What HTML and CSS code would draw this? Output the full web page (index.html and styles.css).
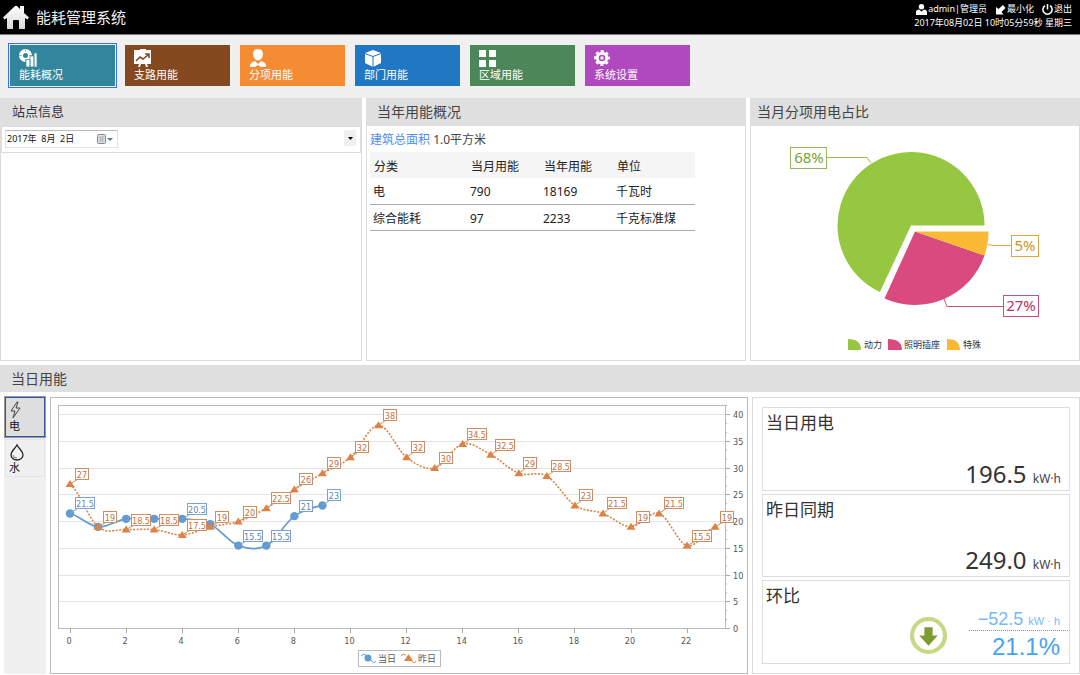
FILE: index.html
```html
<!DOCTYPE html>
<html lang="zh-CN">
<head>
<meta charset="utf-8">
<title>能耗管理系统</title>
<link rel="stylesheet" href="styles.css">
</head>
<body>
<header class="topbar">
  <div class="brand">
    <svg class="brand-icon" viewBox="0 0 26 24" aria-hidden="true">
      <defs><linearGradient id="house" x1="0" y1="0" x2="0" y2="1"><stop offset="0" stop-color="#fff"/><stop offset="1" stop-color="#d8d8d8"/></linearGradient></defs>
      <path fill="url(#house)" d="M11.500 1.500q1.500-1.500 3 0L17 4V1h4v7l5 4.500-1.500 2L22 13v11h-6v-8q0-1-1-1h-4q-1 0-1 1v8H4V13l-2.500 1.500L0 12.500Z"/>
    </svg>
    <h1 class="brand-name">能耗管理系统</h1>
  </div>
  <div class="session">
    <div class="session-links">
      <a class="session-link" href="#user"><svg class="session-icon" viewBox="0 0 11 11" aria-hidden="true"><circle cx="5.500" cy="2.800" r="2.700"/><path d="M0 11V8q0-2 3-2.500L5.500 7.500 8 5.500Q11 6 11 8v3Z"/></svg>admin|管理员</a>
      <a class="session-link" href="#minimize"><svg class="session-icon" viewBox="0 0 11 11" aria-hidden="true"><path d="M1 3v7.500h7.500L6.500 8 10.500 4 8 1 3.500 5Z"/></svg>最小化</a>
      <a class="session-link" href="#exit"><svg class="session-icon" viewBox="0 0 11 11" aria-hidden="true"><path d="M3 1.700a4.600 4.600 0 1 0 5 0M5.500 0v5.500" fill="none" stroke="#fff" stroke-width="1.500"/></svg>退出</a>
    </div>
    <time class="clock" datetime="2017-08-02T10:05:59">2017年08月02日 10时05分59秒 星期三</time>
  </div>
</header>

<nav class="modules">
  <button class="module teal active" type="button">
    <svg class="module-icon" viewBox="0 0 18 18" aria-hidden="true"><circle cx="6.500" cy="6.500" r="4.500" fill="none" stroke="#fff" stroke-width="4"/><path d="M6.500 0v3M6.500 10v3M0 6.500h3M10 6.500h3" stroke="#32869c" stroke-width="0.500"/><path d="M7 10.500h4V18H7ZM11 7h4v11h-4ZM15 4h3v14h-3Z" fill="#fff" stroke="#32869c" stroke-width="0.700"/></svg>
    <span>能耗概况</span>
  </button>
  <button class="module brown" type="button">
    <svg class="module-icon" viewBox="0 0 18 18" aria-hidden="true"><path d="M6 0h6v1h5v14h-4l1 3h-2l-1-3H7l-1 3H4l1-3H0V1h6Z" fill="#fff"/><path d="m2 12 4-4 3 2 5-4M11 5h4v4" fill="none" stroke="#84491f" stroke-width="1.600"/></svg>
    <span>支路用能</span>
  </button>
  <button class="module orange" type="button">
    <svg class="module-icon" viewBox="0 0 18 18" aria-hidden="true"><path d="M9 0c4 0 5 3 5 5s-1.500 6.500-5 6.500S4 7 4 5s1-5 5-5M1 18v-2q1-3 5-4l3 3 3-3q4 1 5 4v2h-5l-3-2-3 2Z" fill="#fff"/></svg>
    <span>分项用能</span>
  </button>
  <button class="module blue" type="button">
    <svg class="module-icon" viewBox="0 0 18 18" aria-hidden="true"><path d="M9 1 17 4v10l-8 4-8-4V4Z" fill="#fff"/><path d="m1 4.500 8 3 8-3M9 7.500V18" fill="none" stroke="#2077c3" stroke-width="1"/></svg>
    <span>部门用能</span>
  </button>
  <button class="module green" type="button">
    <svg class="module-icon" viewBox="0 0 18 18" aria-hidden="true"><path d="M0 1h7v7H0ZM10 1h7v7h-7ZM0 11h7v7H0ZM10 11h7v7h-7Z" fill="#fff"/></svg>
    <span>区域用能</span>
  </button>
  <button class="module purple" type="button">
    <svg class="module-icon" viewBox="0 0 18 18" aria-hidden="true"><circle cx="8" cy="9" r="4.800" fill="none" stroke="#fff" stroke-width="3"/><circle cx="8" cy="9" r="6.700" fill="none" stroke="#fff" stroke-width="2.500" stroke-dasharray="3 2.262" stroke-dashoffset="1.500"/><circle cx="8" cy="9" r="1.700" fill="#fff"/></svg>
    <span>系统设置</span>
  </button>
</nav>

<main>
  <div class="overview">
    <section class="panel">
      <h2 class="panel-title site-title">站点信息</h2>
      <div class="panel-body">
        <div class="date-row">
          <div class="date-field">
            <input class="date-input" type="text" value="2017年  8月  2日" aria-label="日期">
            <svg class="date-icon" viewBox="0 0 16 11" aria-hidden="true"><rect x="0.500" y="0.500" width="8" height="9" rx="1" fill="#dde0e5" stroke="#858890"/><path d="M2 3h5M2 5h5M2 7h5M3.500 2v6M5.500 2v6" stroke="#aab0ba" stroke-width="0.700"/><path d="M10 4h6l-3 3Z" fill="#557b9d"/></svg>
          </div>
          <button class="drop-button" type="button" aria-label="展开"><svg class="drop-icon" viewBox="0 0 5 3" aria-hidden="true"><path d="M0 0h5L2.500 3Z"/></svg></button>
        </div>
      </div>
    </section>

    <section class="panel">
      <h2 class="panel-title">当年用能概况</h2>
      <div class="panel-body usage">
        <p class="area"><a class="area-link" href="#area">建筑总面积</a> 1.0平方米</p>
        <table class="usage-table">
          <thead><tr><th class="col-kind">分类</th><th class="col-num">当月用能</th><th class="col-num">当年用能</th><th>单位</th></tr></thead>
          <tbody>
            <tr><td>电</td><td>790</td><td>18169</td><td>千瓦时</td></tr>
            <tr><td>综合能耗</td><td>97</td><td>2233</td><td>千克标准煤</td></tr>
          </tbody>
        </table>
      </div>
    </section>

    <section class="panel">
      <h2 class="panel-title pie-title">当月分项用电占比</h2>
      <div class="panel-body">
        <svg class="pie" viewBox="0 0 328 234" role="img" aria-label="当月分项用电占比">
          <path fill="#95c840" d="M160 99.500H233.500A73.500 73.500 0 1 0 128.900 166.100Z"/>
          <path fill="#d94a7f" d="M164 105.500 233.500 129.400A73.500 73.500 0 0 1 133.500 172.400Z"/>
          <path fill="#f9b934" d="M164 105.500H237.500A73.500 73.500 0 0 1 233.500 129.400Z"/>
          <g fill="none" stroke="#95b85a"><path d="M76 31.500H116L120 37"/><rect x="39.500" y="21.500" width="36" height="21"/></g>
          <g fill="none" stroke="#dba642"><path d="M237 118.500 243 119.500H260"/><rect x="260.500" y="109.500" width="27" height="21"/></g>
          <g fill="none" stroke="#c7517d"><path d="M193 173 196 180.500H252"/><rect x="252.500" y="169.500" width="35" height="21"/></g>
          <g class="pie-label"><text x="58" y="37" fill="#7aa233">68%</text><text x="274" y="125" fill="#cf9426">5%</text><text x="270" y="185" fill="#b63264">27%</text></g>
          <path fill="#95c840" d="M97 213q13 0 13 11H97Z"/><path fill="#d94a7f" d="M137 213q14 0 14 11h-14Z"/><path fill="#f9b934" d="M196 213q13 0 13 11h-13Z"/>
          <g class="legend-label"><text x="113" y="222">动力</text><text x="153" y="222">照明插座</text><text x="212" y="222">特殊</text></g>
        </svg>
      </div>
    </section>
  </div>

  <section class="daily">
    <h2 class="panel-title daily-title">当日用能</h2>
    <div class="daily-body">
      <div class="media">
        <button class="medium selected" type="button"><svg class="medium-icon" viewBox="0 0 15 18" aria-hidden="true"><path d="M8 1 2 10h4l-2 7 7-10H7l2-6Z" fill="none" stroke="#444" stroke-linejoin="round"/></svg><span>电</span></button>
        <button class="medium" type="button"><svg class="medium-icon" viewBox="0 0 15 18" aria-hidden="true"><path d="M8 2C6 6 2 8 2 12a6 5 0 0 0 12 0C14 8 10 6 8 2Z" fill="none" stroke="#222" stroke-width="1.300"/><path d="M4 12q0 3 4 3" fill="none" stroke="#777"/></svg><span>水</span></button>
      </div>
      <div class="chart-box">
        <svg class="chart" id="chart" viewBox="0 0 696 275" role="img" aria-label="当日与昨日用能曲线"></svg>
      </div>
      <div class="stats">
        <article class="stat">
          <h3 class="stat-name">当日用电</h3>
          <p class="stat-value">196.5 <span class="unit">kW·h</span></p>
        </article>
        <article class="stat">
          <h3 class="stat-name">昨日同期</h3>
          <p class="stat-value">249.0 <span class="unit">kW·h</span></p>
        </article>
        <article class="stat">
          <h3 class="stat-name">环比</h3>
          <div class="compare">
            <svg class="trend" viewBox="0 0 36 36" aria-hidden="true"><circle cx="18" cy="18" r="16" fill="none" stroke="#c5d983" stroke-width="4"/><path d="M14 10h8v8h5l-9 10-9-10h5Z" fill="#809c31"/></svg>
            <div class="ratio">
              <p class="delta">−52.5 <span class="delta-unit">kW · h</span></p>
              <p class="percent">21.1%</p>
            </div>
          </div>
        </article>
      </div>
    </div>
  </section>
</main>
<script src="chart.js"></script>
</body>
</html>
```
FILE: styles.css
```css
* { box-sizing: border-box; }

body {
  margin: 0;
  min-height: 100vh;
  background: #fff;
  color: #222;
  font: 12px/18px "Noto Sans", "Noto Sans CJK SC", sans-serif;
}

h1, h2, h3, p { margin: 0; font-weight: 400; }
a { color: inherit; text-decoration: none; }
button { margin: 0; font: inherit; cursor: pointer; }
svg { display: block; }

.topbar {
  display: flex;
  justify-content: space-between;
  height: 35px;
  padding: 0 8px 0 3px;
  background: #000;
  border-bottom: 1px solid #777;
  color: #fff;
}
.brand { display: flex; align-items: center; gap: 7px; }
.brand-icon { width: 26px; height: 24px; }
.brand-name { font-size: 15px; line-height: 24px; color: #eee; }
.session { padding-top: 2px; font-size: 9px; line-height: 14px; text-align: right; }
.session-links { display: flex; justify-content: flex-end; gap: 8px; }
.session-link { display: flex; align-items: center; gap: 1px; }
.session-icon { width: 11px; height: 11px; fill: #fff; }
.clock { display: block; }

.modules {
  display: flex;
  gap: 10px;
  padding: 10px 10px 12px;
  background: #f0f0f0;
}
.module {
  display: flex;
  flex-direction: column;
  justify-content: space-between;
  width: 105px;
  height: 41px;
  padding: 4px 9px 3px;
  border: 0;
  color: #fff;
  font-size: 11px;
  line-height: 16px;
  text-align: left;
}
.module-icon { width: 18px; height: 18px; }
.teal { background: #32869c; }
.brown { background: #84491f; }
.orange { background: #f58b33; }
.blue { background: #2077c3; }
.green { background: #4b8758; }
.purple { background: #b048bf; }
.active { outline: 1px solid #3d6fe8; outline-offset: 1px; }

.overview {
  display: grid;
  grid-template-columns: 362fr 380fr 330fr;
  gap: 4px;
}
.panel { display: flex; flex-direction: column; }
.panel-title {
  height: 28px;
  padding: 0 11px;
  background: #dfdfdf;
  color: #444;
  font-size: 14px;
  line-height: 27px;
}
.site-title { padding-left: 12px; color: #334; font-size: 13px; }
.pie-title { padding-left: 7px; }
.panel-body { flex: 1; border: 1px solid #dcdcdc; border-top: 0; }

.date-row {
  display: flex;
  align-items: flex-start;
  justify-content: space-between;
  height: 27px;
  padding: 3px 4px 3px 3px;
  border: 1px solid #ddd;
}
.date-field {
  display: flex;
  align-items: center;
  width: 113px;
  height: 18px;
  padding-right: 4px;
  border: 1px solid #dde1e8;
  border-top-color: #bbb;
}
.date-input {
  flex: 1;
  min-width: 0;
  padding: 0 1px;
  border: 0;
  background: none;
  color: #111;
  font: 9px/14px "Noto Sans", "Noto Sans CJK SC", sans-serif;
  white-space: pre;
}
.date-icon { width: 16px; height: 11px; }
.drop-button {
  display: flex;
  align-items: center;
  justify-content: center;
  width: 12px;
  height: 16px;
  padding: 0;
  border: 0;
  background: #f0f0f0;
}
.drop-icon { width: 5px; height: 3px; }

.usage { padding: 5px 3px; }
.area { line-height: 18px; color: #444; }
.area-link { color: #4e8cf5; }
.usage-table {
  width: 325px;
  max-width: 100%;
  margin-top: 3px;
  border-collapse: collapse;
  table-layout: fixed;
}
.usage-table th, .usage-table td { height: 26px; padding: 3px 3px 0; text-align: left; font-weight: 400; }
.usage-table th { padding: 3px 4px 0; background: #f5f5f5; }
.usage-table td { border-bottom: 1px solid #aaa; }
.col-kind { width: 97px; }
.col-num { width: 73px; }

.pie, .chart { width: 100%; height: auto; }
.pie-label { font-size: 15px; text-anchor: middle; }
.legend-label { font-size: 9px; fill: #333; }

.daily { margin-top: 4px; }
.daily-title { height: 27px; }
.daily-body {
  display: grid;
  grid-template-columns: 42fr 698fr 328fr;
  gap: 4px;
  padding: 5px 0 1px 4px;
}
.media {
  display: flex;
  flex-direction: column;
  gap: 2px;
  padding: 0 1px;
  background: #f0f0f0;
}
.medium {
  display: flex;
  flex-direction: column;
  align-items: flex-start;
  height: 38px;
  padding: 3px 3px 0;
  border: 1px solid #e3e3e3;
  background: #f0f0f0;
  color: #111;
  font-size: 11px;
  line-height: 14px;
}
.medium-icon { width: 15px; height: 18px; }
.selected {
  height: 40px;
  border: 1px solid #3454a8;
  outline: 1px solid #999;
  background: #dedede;
}
.chart-box { border: 1px solid #bbb; }

.chart text { font-family: "DejaVu Sans Condensed", "Noto Sans", "Noto Sans CJK SC", sans-serif; font-size: 9px; fill: #555; }
.chart .mark-today { fill: #5d86b0; text-anchor: middle; }
.chart .mark-yesterday { fill: #c0713f; text-anchor: middle; }
.chart .hour { text-anchor: middle; }

.stats {
  display: grid;
  grid-template-rows: repeat(3, 1fr);
  gap: 3px;
  padding: 9px;
  border: 1px solid #ddd;
}
.stat {
  display: flex;
  flex-direction: column;
  justify-content: space-between;
  min-height: 0;
  padding: 3px 8px 0 3px;
  border: 1px solid #ddd;
}
.stat-name { font-size: 17px; line-height: 23px; color: #333; }
.stat-value { font-size: 24px; line-height: 32px; text-align: right; color: #333; }
.unit { font-size: 12px; line-height: 12px; color: #444; }
.compare { display: flex; justify-content: flex-end; align-items: center; gap: 22px; }
.trend { width: 37px; height: 37px; }
.ratio {
  width: 99px;
  margin-right: -7px;
  font-family: "Liberation Sans", Arial, sans-serif;
  color: #45a3f5;
  text-align: right;
}
.delta { padding-right: 8px; border-bottom: 1px dotted #45a3f5; font-size: 18px; line-height: 22px; color: #76b9f8; }
.delta-unit { font-size: 11px; line-height: 12px; }
.percent { padding-right: 8px; font-size: 24px; line-height: 32px; }
```
FILE: chart.js
```javascript
const today = [21.5, 19, 20.5, 20.5, 20.5, 19.5, 15.5, 15.5, 21, 23];
const yesterday = [27, 19, 18.5, 18.5, 17.5, 19, 20, 22.5, 26, 29, 32, 38, 32, 30, 34.5, 32.5, 29, 28.5, 23, 21.5, 19, 21.5, 15.5, 19];
// Hours of today's series whose value boxes overlap another box.
const hiddenToday = [1, 2, 3, 5];

const px = hour => 19 + 28.05 * hour;
const py = value => 230.5 - 5.35 * value;

function spline(values) {
  const at = i => values[Math.max(0, Math.min(values.length - 1, i))];
  let d = `M${px(0)} ${py(values[0])}`;
  for (let i = 0; i < values.length - 1; i++) {
    const a = py(at(i)) + (py(at(i + 1)) - py(at(i - 1))) / 6;
    const b = py(at(i + 1)) - (py(at(i + 2)) - py(at(i))) / 6;
    d += `C${px(i + 1 / 3)} ${a} ${px(i + 2 / 3)} ${b} ${px(i + 1)} ${py(at(i + 1))}`;
  }
  return d;
}

function label(hour, value, name, color) {
  const text = String(value);
  const width = text.length > 2 ? 19 : 13;
  const x = Math.floor(px(hour)) + 5.5;
  const y = Math.round(py(value)) - 15.5;
  return `<path d="M${px(hour)} ${py(value)}L${x + 2} ${y + 11}" stroke="${color}"/>
    <rect x="${x}" y="${y}" width="${width}" height="11" fill="#fff" stroke="${color}"/>
    <text class="${name}" x="${x + width / 2}" y="${y + 9}">${text}</text>`;
}

const triangle = (x, y) => `<path d="M${x} ${y - 4}l4.500 7h-9Z" fill="#dc8243"/>`;

let out = '';
for (let v = 0; v <= 40; v += 5) {
  const y = Math.floor(py(v)) + 0.5;
  out += `<path d="M8 ${y}H674" stroke="#e4e4e4"/><path d="M674 ${y}h5" stroke="#aaa"/>
    <text x="682" y="${y + 3}">${v}</text>`;
}
for (let i = 0; i <= 25; i++) out += `<path d="M674 ${py(i * 5 / 3)}h2" stroke="#aaa"/>`;
out += '<rect x="7.500" y="7.500" width="667" height="223" fill="none" stroke="#bbb"/>';
for (let h = 0; h <= 22; h += 2) {
  out += `<path d="M${Math.floor(px(h)) + 0.5} 231v4" stroke="#aaa"/><text class="hour" x="${px(h) - 1}" y="246">${h}</text>`;
}
out += `<path d="${spline(today)}" fill="none" stroke="#629bd1" stroke-width="1.700"/>`;
today.forEach((v, h) => { out += `<circle cx="${px(h)}" cy="${py(v)}" r="4.200" fill="#629bd1"/>`; });
out += `<path d="${spline(yesterday)}" fill="none" stroke="#dc8243" stroke-width="1.600" stroke-dasharray="2 1.500"/>`;
yesterday.forEach((v, h) => { out += triangle(px(h), py(v)); });
today.forEach((v, h) => { if (!hiddenToday.includes(h)) out += label(h, v, 'mark-today', '#7ba3cc'); });
yesterday.forEach((v, h) => { out += label(h, v, 'mark-yesterday', '#cf8d63'); });
out += `<rect x="307.500" y="252.500" width="82" height="16" fill="#fff" stroke="#bbb"/>
  <path d="M310 258q2-3 5-1m5 5q3 5 5 1" fill="none" stroke="#629bd1"/><circle cx="317" cy="260" r="3.500" fill="#629bd1"/>
  <text x="327" y="264">当日</text>
  <path d="M350 258q2-3 5-1m5 5q3 5 5 1" fill="none" stroke="#dc8243"/>${triangle(357.5, 260)}
  <text x="367" y="264">昨日</text>`;
document.getElementById('chart').innerHTML = out;
```
